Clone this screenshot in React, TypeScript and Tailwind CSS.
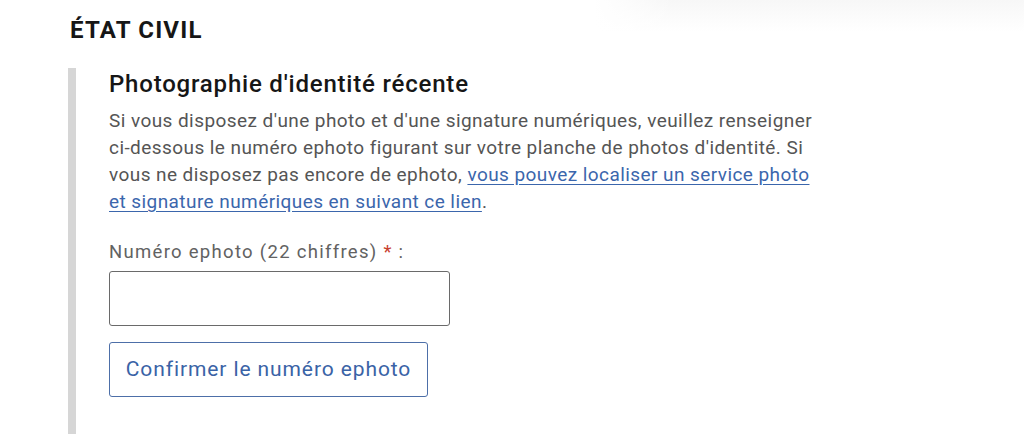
export default function App() {
  return (
    <div
      className="relative w-[1024px] h-[434px] overflow-hidden bg-white"
      style={{ fontFamily: "Roboto, 'Liberation Sans', sans-serif" }}
    >
      {/* faint header shadow, top right */}
      <div className="absolute top-0 right-0 w-[430px] h-[32px] bg-gradient-to-b from-[#f7f7f7] to-white/0" />
      <div className="absolute top-0 right-[350px] w-[80px] h-[32px] bg-gradient-to-r from-white to-white/0" />

      <div className="pl-[70px] pt-[16px]">
        <h2 className="text-[24px] leading-[28px] font-bold text-[#161616] tracking-[1.2px]">
          ÉTAT CIVIL
        </h2>

        <div className="mt-[24px] ml-[-2px] border-l-[8px] border-[#d6d6d6] pl-[33px] pt-[2px] h-[400px]">
          <h3 className="text-[24px] leading-[28px] font-medium text-[#161616] tracking-[0.8px]">
            Photographie d'identité récente
          </h3>
          <p className="mt-[9px] whitespace-nowrap text-[19px] leading-[27px] text-[#555555] tracking-[0.43px]">
            Si vous disposez d'une photo et d'une signature numériques, veuillez renseigner
            <br />
            ci-dessous le numéro ephoto figurant sur votre planche de photos d'identité. Si
            <br />
            vous ne disposez pas encore de ephoto,{" "}
            <a href="#" className="text-[#3b66ac] underline underline-offset-[3px]">
              vous pouvez localiser un service photo
              <br />
              et signature numériques en suivant ce lien
            </a>
            .
          </p>

          <label className="block mt-[25px] text-[18.5px] leading-[24px] text-[#626262] tracking-[1.3px]">
            Numéro ephoto (22 chiffres) <span className="text-[#c8402f]">*</span> :
          </label>
          <input
            type="text"
            className="block mt-[7px] w-[341px] h-[55px] border-[1.5px] border-[#6a6a6a] rounded-[3px] outline-none"
          />
          <button className="mt-[16px] w-[319px] h-[55px] border border-[#4d6fa8] rounded-[3px] text-[21px] text-[#3a63a6] bg-white tracking-[0.9px]">
            Confirmer le numéro ephoto
          </button>
        </div>
      </div>
    </div>
  );
}
